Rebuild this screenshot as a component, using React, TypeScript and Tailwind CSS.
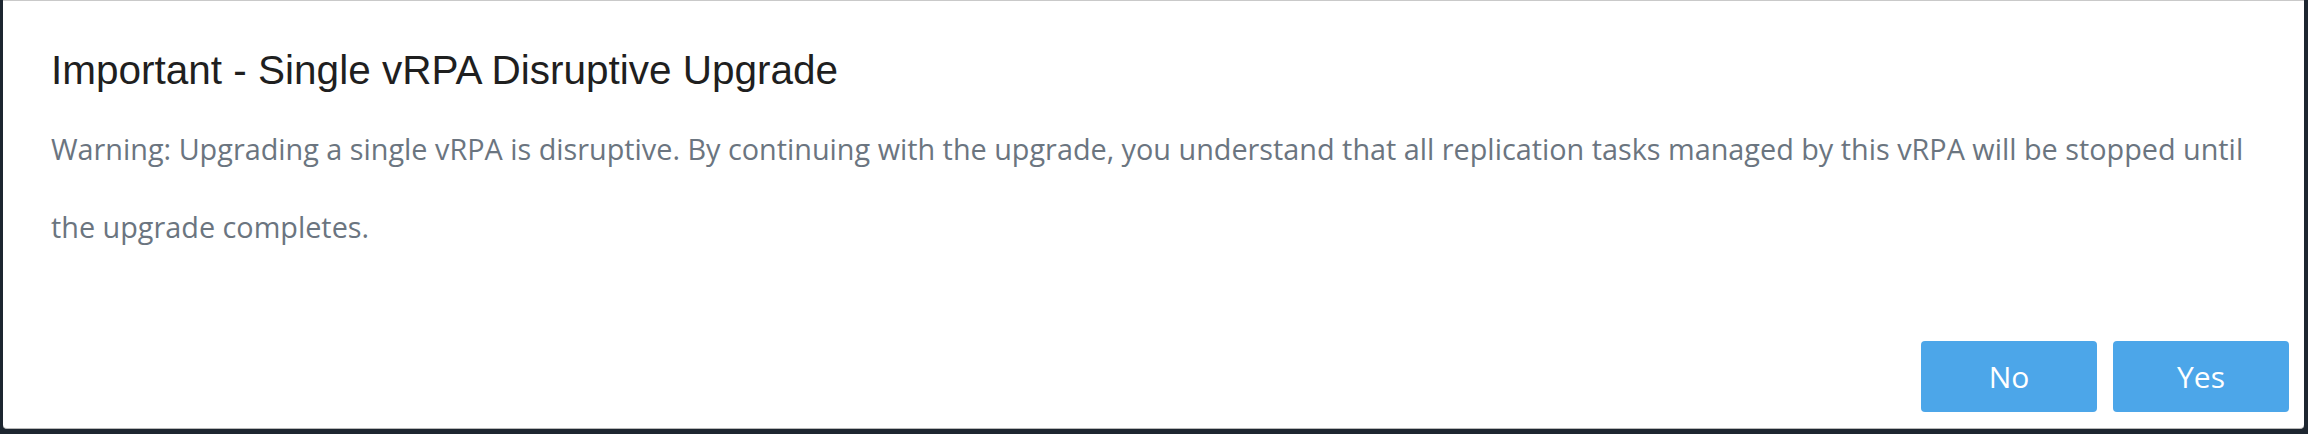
export default function App() {
  return (
    <div className="h-[434px] w-full bg-[#1d2630] pl-[3px] pr-[4px] pb-[5px] flex flex-col">
      {/* Dialog */}
      <div className="flex-1 flex flex-col bg-white border-t border-t-[#c9c9c9] border-b border-b-[#b8b8b8] rounded-b-[4px] pl-[48px] pr-[15px] pt-[46px] pb-[16px]">
        <h1 className="text-[40.5px] leading-[46px] text-[#1f1f1f] font-['Liberation_Sans',Arial,sans-serif]">
          Important - Single vRPA Disruptive Upgrade
        </h1>
        <p className="mt-[17px] pr-[10px] text-[28.8px] leading-[78px] text-[#6b7580] font-['Open_Sans',sans-serif]">
          Warning: Upgrading a single vRPA is disruptive. By continuing with the upgrade, you understand that all replication tasks managed by this vRPA will be stopped until the upgrade completes.
        </p>

        {/* Footer */}
        <div className="mt-auto flex justify-end gap-[16px]">
          <button className="w-[176px] h-[71px] rounded-[4px] bg-[#4ca6e9] text-white text-[30px] font-['Open_Sans',sans-serif]">
            No
          </button>
          <button className="w-[176px] h-[71px] rounded-[4px] bg-[#4ca6e9] text-white text-[30px] font-['Open_Sans',sans-serif]">
            Yes
          </button>
        </div>
      </div>
    </div>
  )
}
